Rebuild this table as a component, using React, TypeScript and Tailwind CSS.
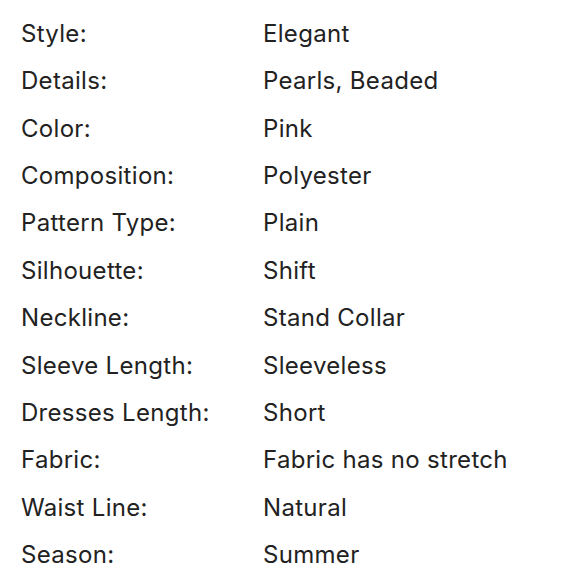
import React from "react";

const rows: [string, string][] = [
  ["Style:", "Elegant"],
  ["Details:", "Pearls, Beaded"],
  ["Color:", "Pink"],
  ["Composition:", "Polyester"],
  ["Pattern Type:", "Plain"],
  ["Silhouette:", "Shift"],
  ["Neckline:", "Stand Collar"],
  ["Sleeve Length:", "Sleeveless"],
  ["Dresses Length:", "Short"],
  ["Fabric:", "Fabric has no stretch"],
  ["Waist Line:", "Natural"],
  ["Season:", "Summer"],
];

export default function App() {
  return (
    <div
      className="w-[580px] h-[580px] bg-white overflow-hidden pl-[21px] pt-[10px] text-[#222222]"
      style={{ fontFamily: "Inter, 'Noto Sans', sans-serif" }}
    >
      <div className="grid grid-cols-[242px_1fr] text-[24px] leading-[47.36px] tracking-[0.3px]">
        {rows.map(([k, v]) => (
          <React.Fragment key={k}>
            <div>{k}</div>
            <div>{v}</div>
          </React.Fragment>
        ))}
      </div>
    </div>
  );
}
